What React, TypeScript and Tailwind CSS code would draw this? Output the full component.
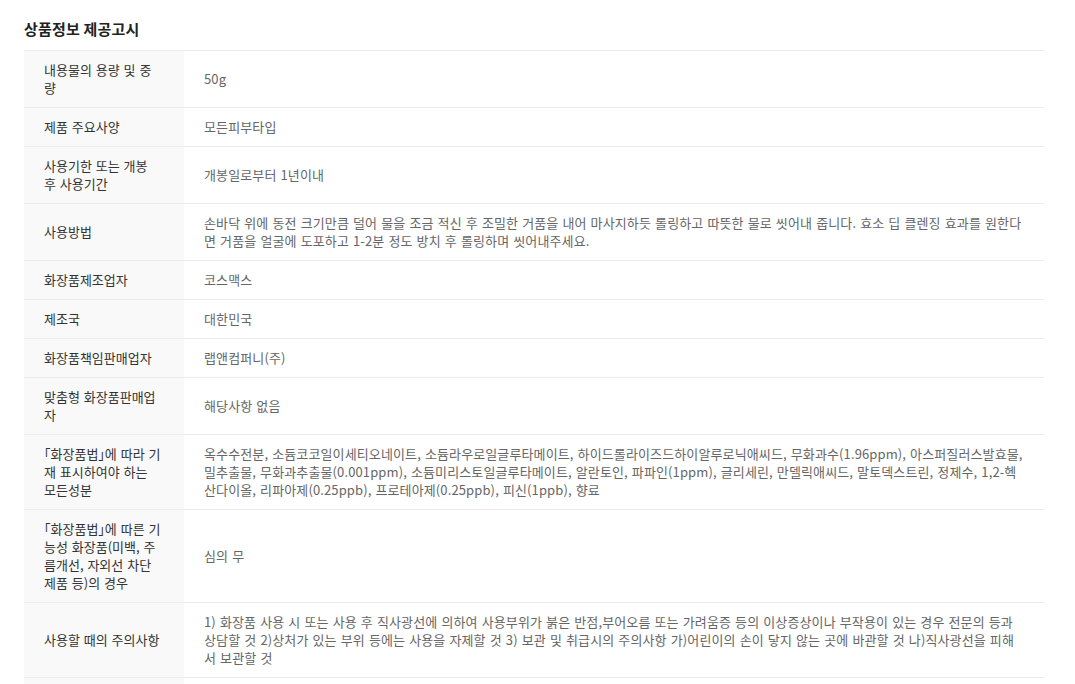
import React from 'react';

const rows: { label: string; value: string }[] = [
  { label: '내용물의 용량 및 중량', value: '50g' },
  { label: '제품 주요사양', value: '모든피부타입' },
  { label: '사용기한 또는 개봉 후 사용기간', value: '개봉일로부터 1년이내' },
  {
    label: '사용방법',
    value:
      '손바닥 위에 동전 크기만큼 덜어 물을 조금 적신 후 조밀한 거품을 내어 마사지하듯 롤링하고 따뜻한 물로 씻어내 줍니다. 효소 딥 클렌징 효과를 원한다면 거품을 얼굴에 도포하고 1-2분 정도 방치 후 롤링하며 씻어내주세요.',
  },
  { label: '화장품제조업자', value: '코스맥스' },
  { label: '제조국', value: '대한민국' },
  { label: '화장품책임판매업자', value: '랩앤컴퍼니(주)' },
  { label: '맞춤형 화장품판매업자', value: '해당사항 없음' },
  {
    label: '「화장품법」에 따라 기재 표시하여야 하는 모든성분',
    value:
      '옥수수전분, 소듐코코일이세티오네이트, 소듐라우로일글루타메이트, 하이드롤라이즈드하이알루로닉애씨드, 무화과수(1.96ppm), 아스퍼질러스발효물, 밀추출물, 무화과추출물(0.001ppm), 소듐미리스토일글루타메이트, 알란토인, 파파인(1ppm), 글리세린, 만델릭애씨드, 말토덱스트린, 정제수, 1,2-헥산다이올, 리파아제(0.25ppb), 프로테아제(0.25ppb), 피신(1ppb), 향료',
  },
  {
    label: '「화장품법」에 따른 기능성 화장품(미백, 주름개선, 자외선 차단제품 등)의 경우',
    value: '심의 무',
  },
  {
    label: '사용할 때의 주의사항',
    value:
      '1) 화장품 사용 시 또는 사용 후 직사광선에 의하여 사용부위가 붉은 반점,부어오름 또는 가려움증 등의 이상증상이나 부작용이 있는 경우 전문의 등과 상담할 것 2)상처가 있는 부위 등에는 사용을 자제할 것 3) 보관 및 취급시의 주의사항 가)어린이의 손이 닿지 않는 곳에 바관할 것 나)직사광선을 피해서 보관할 것',
  },
  { label: '품질보증기준', value: '본 제품에 이상이 있을 경우 공정거래위원회 고시 소비자분쟁해결기준에 의해 보상해드립니다.' },
];

const font = { fontFamily: '"Noto Sans CJK KR", "Noto Sans", sans-serif' };

export default function App() {
  return (
    <div className="w-[1075px] h-[684px] overflow-hidden bg-white" style={font}>
      <div className="px-6">
        <h2 className="pt-[18px] pb-[11px] text-[15px] leading-[21px] font-bold text-[#222] tracking-[0.2px]">
          상품정보 제공고시
        </h2>
        <div className="w-[1020px] border-t border-[#ebebeb]">
          {rows.map((row) => (
            <div key={row.label} className="flex border-b border-[#ebebeb]">
              <div className="w-[160px] shrink-0 bg-[#f9f9f9] pl-5 pr-[21px] py-[10px] flex items-center text-[13px] leading-[18px] [word-spacing:1px] [font-feature-settings:'halt'] text-[#333]">
                {row.label}
              </div>
              <div className="flex-1 px-5 py-[10px] flex items-center text-[13px] leading-[18px] tracking-[0.12px] [word-spacing:1px] text-[#666]">
                {row.value}
              </div>
            </div>
          ))}
        </div>
      </div>
    </div>
  );
}
